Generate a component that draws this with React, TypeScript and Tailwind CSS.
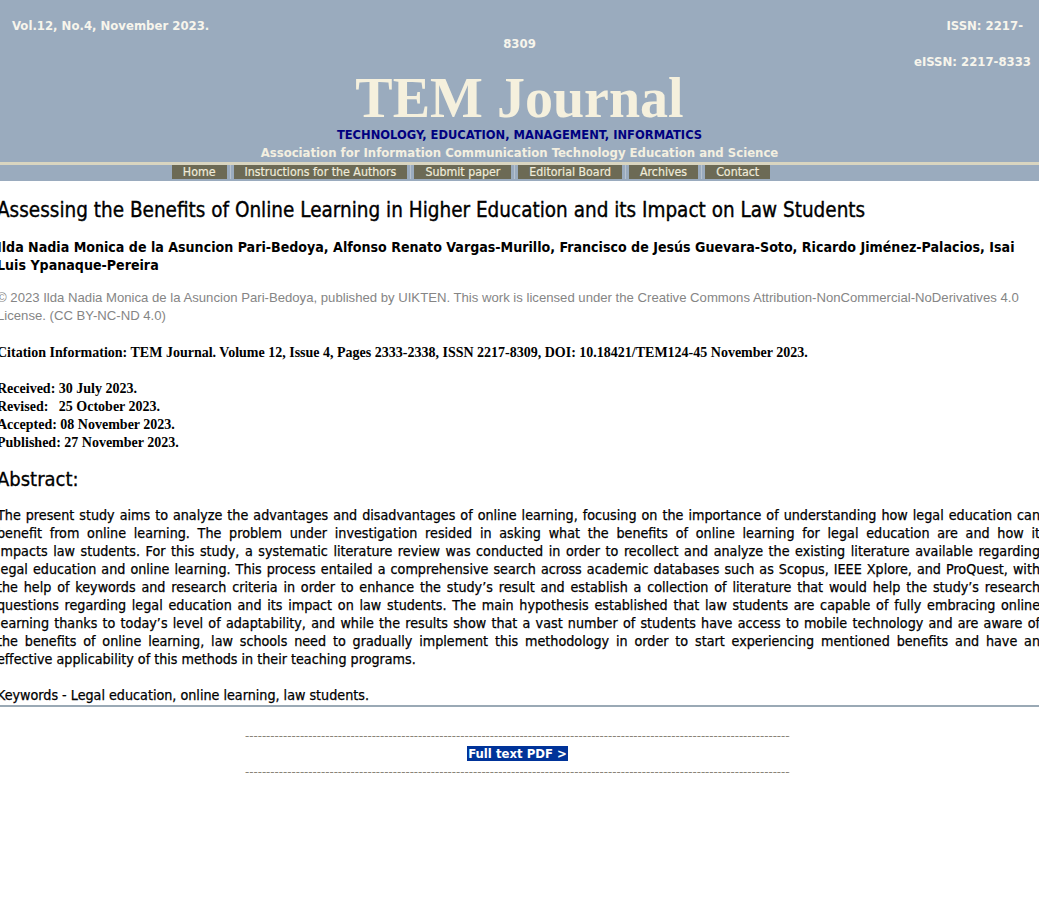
import React from 'react';

const tahoma = '[font-family:"DejaVu_Sans_Condensed","DejaVu_Sans",sans-serif]';

const navItems = ['Home', 'Instructions for the Authors', 'Submit paper', 'Editorial Board', 'Archives', 'Contact'];

// line breaks as they fall on the original page
const abstractLines = [
  'The present study aims to analyze the advantages and disadvantages of online learning, focusing on the importance of understanding how legal education can',
  'benefit from online learning. The problem under investigation resided in asking what the benefits of online learning for legal education are and how it',
  'impacts law students. For this study, a systematic literature review was conducted in order to recollect and analyze the existing literature available regarding',
  'legal education and online learning. This process entailed a comprehensive search across academic databases such as Scopus, IEEE Xplore, and ProQuest, with',
  'the help of keywords and research criteria in order to enhance the study\u2019s result and establish a collection of literature that would help the study\u2019s research',
  'questions regarding legal education and its impact on law students. The main hypothesis established that law students are capable of fully embracing online',
  'learning thanks to today\u2019s level of adaptability, and while the results show that a vast number of students have access to mobile technology and are aware of',
  'the benefits of online learning, law schools need to gradually implement this methodology in order to start experiencing mentioned benefits and have an',
];
const abstractLast = 'effective applicability of this methods in their teaching programs.';

function Header() {
  return (
    <header className="bg-[#9aabbe] [font-family:'DejaVu_Sans_Condensed','DejaVu_Sans',sans-serif]">
      <div className="pt-[17px] text-[13px] font-bold leading-[18px] text-[#f7f5ec]">
        <div className="flex justify-between pl-[12px] pr-[16px]">
          <span>Vol.12, No.4, November 2023.</span>
          <span>ISSN: 2217-</span>
        </div>
        <div className="text-center">8309</div>
        <div className="pr-[8px] text-right">eISSN: 2217-8333</div>
      </div>
      <div className="text-center">
        <h1 className="text-[56px] font-bold leading-[55px] text-[#f5f0dd] [font-family:'Liberation_Serif',serif]">
          TEM Journal
        </h1>
        <div className="text-[12.8px] font-bold leading-[18px] text-[#000080]">
          TECHNOLOGY, EDUCATION, MANAGEMENT, INFORMATICS
        </div>
        <div className="text-[13px] font-bold leading-[18px] text-[#f3efe0]">
          Association for Information Communication Technology Education and Science
        </div>
      </div>
      <div className="h-[3px] bg-[#d9d5c0]" />
      <nav className="flex h-[14px] items-start justify-center pr-[97px]">
        {navItems.map((item, i) => (
          <React.Fragment key={item}>
            {i > 0 && <span className="mx-[3px] h-[14px] w-[1px] bg-[#b8c3cf]" />}
            <a className="flex h-[14px] items-center bg-[#6c6a55] px-[11px] text-[12.3px] leading-[14px] text-[#efebd9] [-webkit-text-stroke:0.2px_#efebd9]">
              {item}
            </a>
          </React.Fragment>
        ))}
      </nav>
      <div className="h-[2px]" />
    </header>
  );
}

function Article() {
  return (
    <main className="-ml-[3px] w-[1043px] pt-[17px] text-black">
      <h2 className={`text-[20.5px] leading-[24px] [-webkit-text-stroke:0.35px_black] ${tahoma}`}>
        Assessing the Benefits of Online Learning in Higher Education and its Impact on Law Students
      </h2>
      <p className={`mt-[16px] pr-[12px] text-[14.1px] font-bold leading-[18px] ${tahoma}`}>
        Ilda Nadia Monica de la Asuncion Pari-Bedoya, Alfonso Renato Vargas-Murillo, Francisco de Jes&uacute;s Guevara-Soto, Ricardo Jim&eacute;nez-Palacios, Isai Luis Ypanaque-Pereira
      </p>
      <p className="mt-[15px] text-[13.15px] leading-[18px] text-[#858585] [font-family:'Liberation_Sans',Arial,sans-serif]">
        &copy; 2023 Ilda Nadia Monica de la Asuncion Pari-Bedoya, published by UIKTEN. This work is licensed under the Creative Commons Attribution-NonCommercial-NoDerivatives 4.0 License. (CC BY-NC-ND 4.0)
      </p>
      <div className="text-[14px] font-bold leading-[18px] [font-family:'Liberation_Serif','Times_New_Roman',serif]">
        <p className="mt-[19px]">
          Citation Information: TEM Journal. Volume 12, Issue 4, Pages 2333-2338, ISSN 2217-8309, DOI: 10.18421/TEM124-45 November 2023.
        </p>
        <div className="mt-[18px]">
          <div>Received: 30 July 2023.</div>
          <div className="whitespace-pre">Revised:   25 October 2023.</div>
          <div>Accepted: 08 November 2023.</div>
          <div>Published: 27 November 2023.</div>
        </div>
      </div>
      <h3 className={`mt-[14px] text-[20px] leading-[26px] [-webkit-text-stroke:0.3px_black] ${tahoma}`}>Abstract:</h3>
      <div className={`mt-[14px] text-[14.2px] leading-[18px] [-webkit-text-stroke:0.25px_black] ${tahoma}`}>
        {abstractLines.map((line) => (
          <div key={line} className="whitespace-nowrap text-justify [text-align-last:justify]">
            {line}
          </div>
        ))}
        <div>{abstractLast}</div>
        <p className="mt-[18px]">Keywords - Legal education, online learning, law students.</p>
      </div>
    </main>
  );
}

export default function App() {
  return (
    <div className="min-h-[920px] w-full overflow-hidden bg-white">
      <Header />
      <Article />
      <div className="mt-[1px] h-[2px] bg-[#9aa9b5]" />
      <div className={`mx-auto mt-[20px] w-[549px] pr-[4px] text-[13px] leading-[18px] ${tahoma}`}>
        <div className="overflow-hidden whitespace-nowrap text-[#8a8478]">
          {'-'.repeat(170)}
        </div>
        <div className="text-center">
          <a className="bg-[#003399] px-[1px] font-bold text-white">Full text PDF &gt;</a>
        </div>
        <div className="overflow-hidden whitespace-nowrap text-[#8a8478]">
          {'-'.repeat(170)}
        </div>
      </div>
    </div>
  );
}
